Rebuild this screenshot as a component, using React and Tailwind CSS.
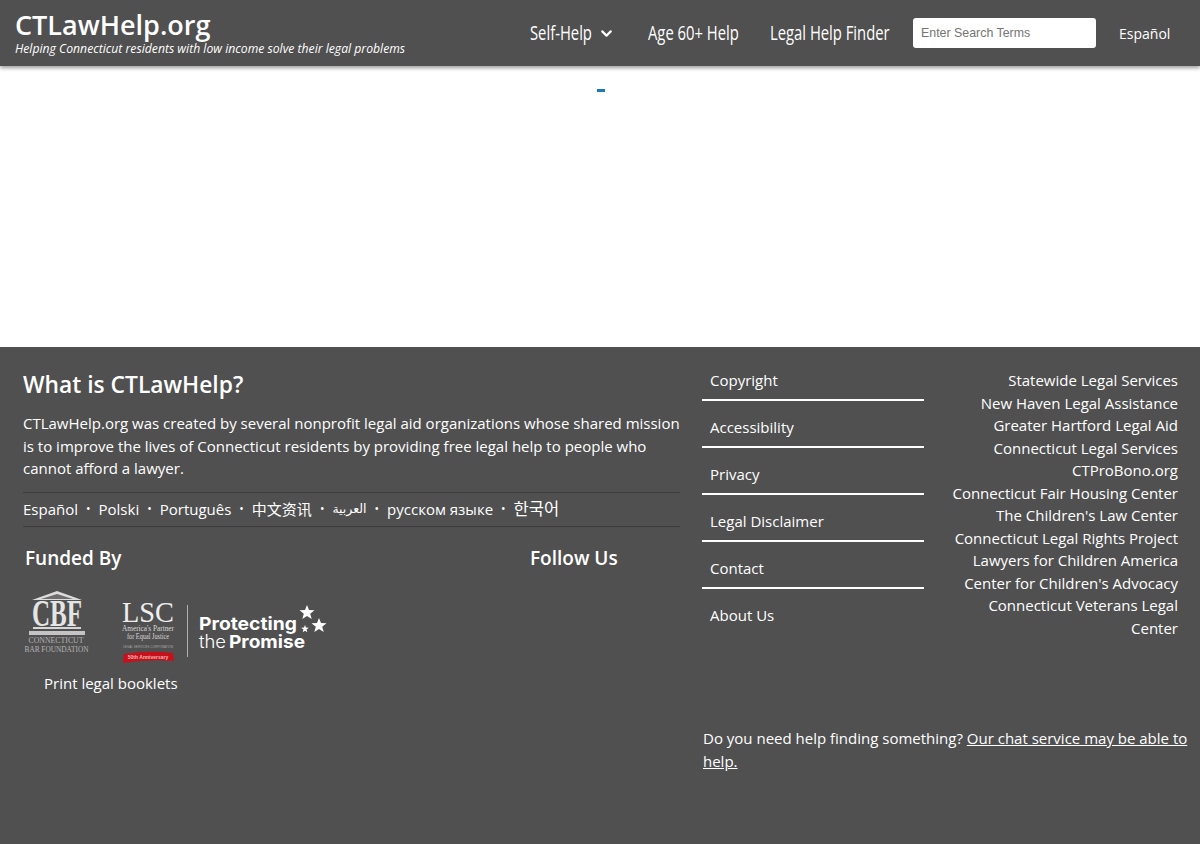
import React from "react";
import { ChevronDown } from "lucide-react";

const OS = "font-['Open_Sans','Noto_Sans','Noto_Sans_CJK_SC',sans-serif]";
const footerLinks = ["Copyright", "Accessibility", "Privacy", "Legal Disclaimer", "Contact", "About Us"];
const orgs = ["Statewide Legal Services", "New Haven Legal Assistance", "Greater Hartford Legal Aid", "Connecticut Legal Services", "CTProBono.org", "Connecticut Fair Housing Center", "The Children's Law Center", "Connecticut Legal Rights Project", "Lawyers for Children America", "Center for Children's Advocacy", "Connecticut Veterans Legal Center"];
const langs = ["Español", "Polski", "Português", "中文资讯", "العربية", "русском языке", "한국어"];

function NavText({ children, w }) {
  return (
    <span className="inline-block text-[20px] leading-[26px] text-white font-medium origin-left scale-x-[0.74] whitespace-nowrap" style={{ width: w }}>
      {children}
    </span>
  );
}

function Logos() {
  return (
    <div className="flex items-start h-[80px] ml-[24px]">
      <svg width="66" height="64" viewBox="0 0 66 64" role="img" aria-label="Connecticut Bar Foundation">
        <path d="M8 10 L33 1 L58 10 Z" fill="#dcdcdc" />
        <path d="M17 9 L33 4 L49 9 Z" fill="#6e6e6e" />
        <text x="33" y="36" textAnchor="middle" fontFamily="Liberation Serif" fontWeight="700" fontSize="37" fill="#e4e4e4" textLength="50" lengthAdjust="spacingAndGlyphs">CBF</text>
        <rect x="9" y="37" width="48" height="2" fill="#d6d6d6" />
        <rect x="5" y="41" width="56" height="4" fill="#c4c4c4" />
        <text x="32" y="53" textAnchor="middle" fontFamily="Liberation Serif" fontSize="8" fill="#b4b4b4" textLength="55" lengthAdjust="spacingAndGlyphs">CONNECTICUT</text>
        <text x="32.5" y="61.5" textAnchor="middle" fontFamily="Liberation Serif" fontSize="8" fill="#b4b4b4" textLength="64" lengthAdjust="spacingAndGlyphs">BAR FOUNDATION</text>
      </svg>
      <svg width="238" height="80" viewBox="0 0 238 80" className="ml-[32px]" role="img" aria-label="LSC Protecting the Promise">
        <text x="0" y="32" fontFamily="Liberation Serif" fontSize="30" fill="#eeeeee" textLength="52" lengthAdjust="spacingAndGlyphs">LSC</text>
        <text x="26" y="41" textAnchor="middle" fontFamily="Liberation Serif" fontSize="8" fill="#d8d8d8" textLength="52" lengthAdjust="spacingAndGlyphs">America's Partner</text>
        <text x="26" y="49" textAnchor="middle" fontFamily="Liberation Serif" fontSize="8" fill="#d8d8d8" textLength="42" lengthAdjust="spacingAndGlyphs">for Equal Justice</text>
        <text x="26" y="58" textAnchor="middle" fontFamily="Liberation Sans" fontSize="3.5" fill="#a8a8a8" textLength="50" lengthAdjust="spacingAndGlyphs">LEGAL SERVICES CORPORATION</text>
        <path d="M2 64 Q26 60 51 63 L52 71 Q26 69 1 73 Z" fill="#c8101a" />
        <text x="26" y="69" textAnchor="middle" fontFamily="Liberation Sans" fontWeight="700" fontSize="5" fill="#eeb8b8">50th Anniversary</text>
        <rect x="65" y="15" width="1" height="52" fill="#b0b0b0" />
        <text x="77" y="40" fontFamily="Inter" fontWeight="700" fontSize="18" fill="#ffffff" textLength="98" lengthAdjust="spacingAndGlyphs">Protecting</text>
        <text x="77" y="58" fontFamily="Inter" fontWeight="300" fontSize="18" fill="#ffffff" textLength="27" lengthAdjust="spacingAndGlyphs">the</text>
        <text x="107" y="58" fontFamily="Inter" fontWeight="700" fontSize="18" fill="#ffffff" textLength="76" lengthAdjust="spacingAndGlyphs">Promise</text>
        <path d="M185 15 L187 20 L192.5 20.3 L188.2 23.8 L189.7 29 L185 26 L180.3 29 L181.8 23.8 L177.5 20.3 L183 20 Z" fill="#ffffff" />
        <path d="M197 28 L199 33 L204.5 33.3 L200.2 36.8 L201.7 42 L197 39 L192.3 42 L193.8 36.8 L189.5 33.3 L195 33 Z" fill="#ffffff" />
        <path d="M183 35 L184 37.6 L186.8 37.8 L184.6 39.6 L185.3 42.3 L183 40.8 L180.7 42.3 L181.4 39.6 L179.2 37.8 L182 37.6 Z" fill="#ffffff" />
      </svg>
    </div>
  );
}

export default function App() {
  return (
    <div className={`${OS} min-h-[844px] flex flex-col bg-white text-white overflow-hidden`}>
      <header className="h-[66px] bg-[#505050] shadow-[0_2px_4px_rgba(0,0,0,0.4)] flex items-center relative z-10">
        <div className="w-[530px] pl-[15px] pt-[1px] shrink-0">
          <div className="text-[27px] leading-[30px] font-semibold">CTLawHelp.org</div>
          <div className="text-[12.2px] leading-[18px] italic whitespace-nowrap">Helping Connecticut residents with low income solve their legal problems</div>
        </div>
        <nav className="flex items-center flex-1">
          <div className="w-[118px] flex items-center">
            <NavText w="68px">Self-Help</NavText>
            <ChevronDown size={17} strokeWidth={3} className="mt-[1px]" />
          </div>
          <div className="w-[122px]"><NavText w="100px">Age 60+ Help</NavText></div>
          <div className="w-[143px]"><NavText w="130px">Legal Help Finder</NavText></div>
          <input readOnly placeholder="Enter Search Terms" className="w-[183px] h-[30px] bg-white rounded-[3px] px-2 text-[12.4px] font-['Liberation_Sans',sans-serif] placeholder:text-[#757575] outline-none" />
          <span className="ml-[23px] text-[14px]">Español</span>
        </nav>
      </header>

      <main className="h-[281px] flex justify-center items-start pt-[23px]">
        <div className="w-[8px] h-[3px] ml-[2px] bg-[#1a7ab8]" />
      </main>

      <footer className="h-[497px] bg-[#505050] flex relative">
        <div className="w-[703px] shrink-0 pl-[23px] pr-[23px]">
          <h2 className="text-[22.8px] leading-[30px] font-semibold mt-[23px]">What is CTLawHelp?</h2>
          <p className="text-[15px] leading-[22.5px] mt-[12px] whitespace-nowrap">
            CTLawHelp.org was created by several nonprofit legal aid organizations whose shared mission<br />
            is to improve the lives of Connecticut residents by providing free legal help to people who<br />
            cannot afford a lawyer.
          </p>
          <div className="mt-[12px] h-[33px] border-y border-[#3d3d3d] flex items-center text-[15px] whitespace-nowrap box-content">
            {langs.map((l, i) => (
              <React.Fragment key={l}>
                {i > 0 && <span className="mx-[8px] text-[12px]">•</span>}
                <span className={i === 4 ? "text-[12.5px] font-['DejaVu_Sans',sans-serif]" : i === 6 ? "text-[16.5px]" : ""}>{l}</span>
              </React.Fragment>
            ))}
          </div>
          <div className="flex mt-[17px] pl-[2px]">
            <h3 className="w-[505px] text-[19px] leading-[28px] font-semibold">Funded By</h3>
            <h3 className="text-[19px] leading-[28px] font-semibold">Follow Us</h3>
          </div>
          <div className="mt-[18px] -ml-[23px]"><Logos /></div>
          <div className="mt-[3px] pl-[21px] text-[15px] leading-[20px]">Print legal booklets</div>
        </div>

        <div className="flex-1 flex flex-col min-w-0">
          <div className="flex">
            <ul className="w-[222px] shrink-0 mt-[7px] ml-[-1px]">
              {footerLinks.map((l, i) => (
                <li key={l} className={`h-[47px] pl-[8px] pt-[15px] text-[15px] leading-[22px] ${i < 5 ? "border-b-2 border-white" : ""}`}>
                  {l}
                </li>
              ))}
            </ul>
            <ul className="flex-1 mt-[22px] pr-[22px] pl-[20px] text-right text-[15px] leading-[22.5px]">
              {orgs.map((o) => <li key={o}>{o}</li>)}
            </ul>
          </div>
          <p className="mt-[88px] text-[15px] leading-[22.5px]">
            Do you need help finding something? <span className="underline">Our chat service may be able to help.</span>
          </p>
        </div>
      </footer>
    </div>
  );
}
